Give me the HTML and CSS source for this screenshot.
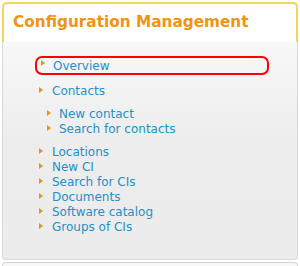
FILE: index.html
```html
<!DOCTYPE html>
<html>
<head>
<meta charset="utf-8">
<link rel="stylesheet" href="styles.css">
</head>
<body>
<div class="card">
  <div class="card-head"><h1 class="title">Configuration Management</h1></div>
  <div class="card-body">
    <div class="current"><span class="bullet"></span><a class="link">Overview</a></div>
    <ul class="menu">
      <li class="item"><span class="bullet"></span><a class="link">Contacts</a></li>
    </ul>
    <ul class="menu sub">
      <li class="item"><span class="bullet"></span><a class="link">New contact</a></li>
      <li class="item"><span class="bullet"></span><a class="link">Search for contacts</a></li>
    </ul>
    <ul class="menu">
      <li class="item"><span class="bullet"></span><a class="link">Locations</a></li>
      <li class="item"><span class="bullet"></span><a class="link">New CI</a></li>
      <li class="item"><span class="bullet"></span><a class="link">Search for CIs</a></li>
      <li class="item"><span class="bullet"></span><a class="link">Documents</a></li>
      <li class="item"><span class="bullet"></span><a class="link">Software catalog</a></li>
      <li class="item"><span class="bullet"></span><a class="link">Groups of CIs</a></li>
    </ul>
  </div>
</div>
<div class="next-card"></div>
</body>
</html>
```

FILE: styles.css
```css
html, body {
  margin: 0;
  padding: 0;
  background: #ffffff;
}
body {
  font-family: "DejaVu Sans", Verdana, sans-serif;
  padding-top: 2px;
}
.card {
  margin: 0 2px;
  border-radius: 5px;
}
.card-head {
  height: 38px;
  border: 2px solid #f6d35a;
  border-bottom: none;
  border-radius: 5px 5px 0 0;
  background: #fefefe;
}
.title {
  margin: 0;
  padding: 9px 0 0 9px;
  font-size: 15.3px;
  line-height: 18px;
  font-weight: bold;
  color: #f09412;
}
.card-body {
  padding-top: 14px;
  height: 203px;
  border: 1px solid #d9d9d9;
  border-top: none;
  border-radius: 0 0 4px 4px;
  background: linear-gradient(#f8f8f8, #ededed 45%, #ececec);
}
.current {
  display: flex;
  align-items: flex-start;
  margin-left: 32px;
  width: 226px;
  height: 14px;
  padding-top: 1px;
  border: 2px solid #ff0000;
  border-radius: 7px;
  padding-left: 4px;
  line-height: 14px;
  font-size: 12px;
}
.current .bullet {
  margin-top: 1px;
  margin-right: 8px;
}
.bullet {
  flex: none;
  width: 0;
  height: 0;
  border-left: 4px solid #e8921a;
  border-top: 3px solid transparent;
  border-bottom: 3px solid transparent;
  margin: 3px 9px 0 0;
}
.link {
  color: #2390c6;
  text-decoration: none;
}
.menu {
  list-style: none;
  margin: 9px 0 0 0;
  padding: 0 0 0 36px;
  font-size: 12px;
  line-height: 15px;
}
.menu + .menu {
  margin-top: 8px;
}
.menu.sub {
  padding-left: 44px;
}
.menu.sub .bullet {
  margin-right: 8px;
}
.item {
  display: flex;
  align-items: flex-start;
}
.next-card {
  margin: 2px 2px 0;
  height: 10px;
  border: 1px solid #d5d5d5;
  border-bottom: none;
  border-radius: 4px 4px 0 0;
  background: #f8f8f8;
}
```
